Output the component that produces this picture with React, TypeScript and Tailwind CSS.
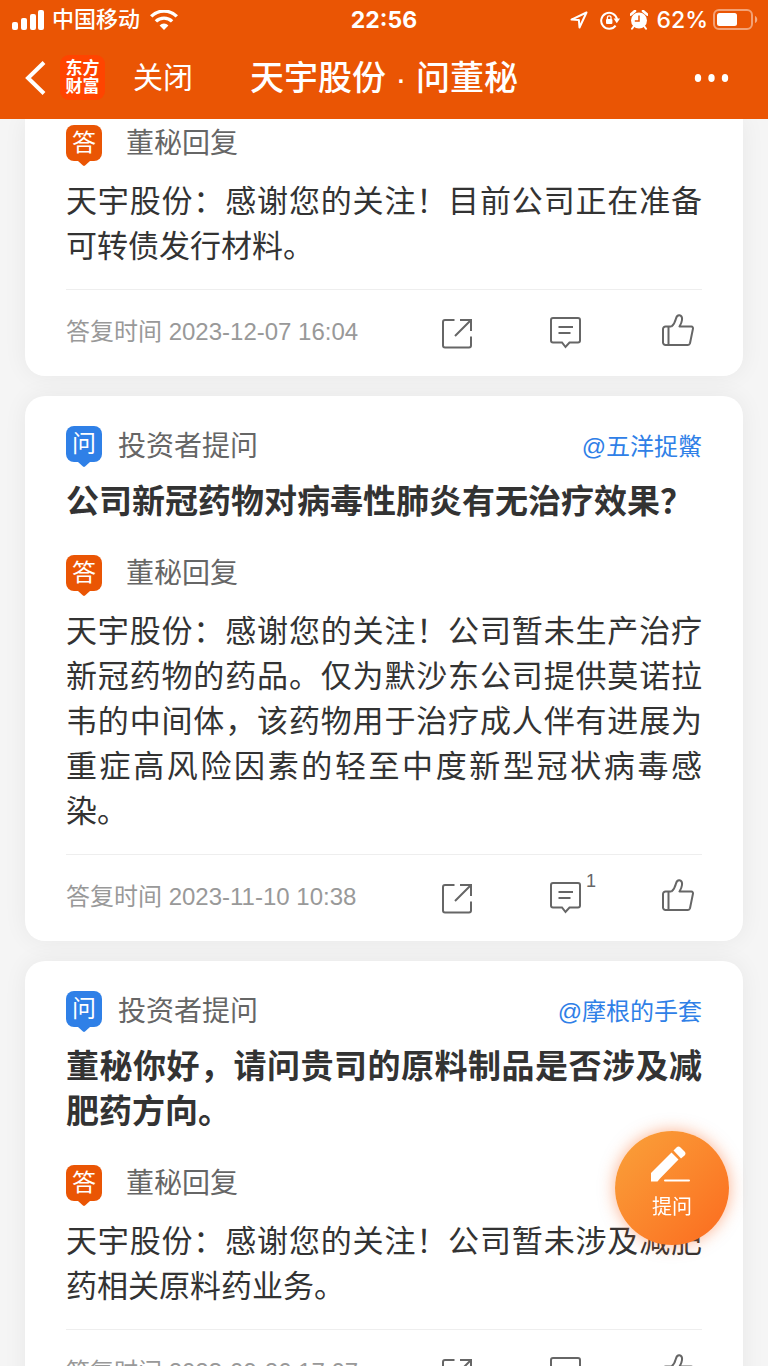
import React from 'react';
import clsx from 'clsx';

interface QaItem {
  id: number;
  user?: string;
  question?: string;
  answer: string;
  time: string;
  comments?: number;
}

const items: QaItem[] = [
  {
    id: 1,
    answer: '天宇股份：感谢您的关注！目前公司正在准备可转债发行材料。',
    time: '2023-12-07 16:04',
  },
  {
    id: 2,
    user: '@五洋捉鱉',
    question: '公司新冠药物对病毒性肺炎有无治疗效果？',
    answer:
      '天宇股份：感谢您的关注！公司暂未生产治疗新冠药物的药品。仅为默沙东公司提供莫诺拉韦的中间体，该药物用于治疗成人伴有进展为重症高风险因素的轻至中度新型冠状病毒感染。',
    time: '2023-11-10 10:38',
    comments: 1,
  },
  {
    id: 3,
    user: '@摩根的手套',
    question: '董秘你好，请问贵司的原料制品是否涉及减肥药方向。',
    answer: '天宇股份：感谢您的关注！公司暂未涉及减肥药相关原料药业务。',
    time: '2023-09-26 17:07',
  },
];

function StatusBar() {
  return (
    <div className="grid h-10 grid-cols-[1fr_auto_1fr] items-center px-3">
      <div className="flex items-center">
        <svg width="32" height="20" viewBox="0 0 32 20" fill="currentColor">
          <rect x="0" y="12" width="6" height="8" rx="2" />
          <rect x="9" y="8" width="6" height="12" rx="2" />
          <rect x="18" y="4" width="6" height="16" rx="2" />
          <rect x="26" y="0" width="6" height="20" rx="2" />
        </svg>
        <span className="ml-2 text-[22px] leading-none font-medium">中国移动</span>
        <svg className="ml-2.5" width="28" height="20" viewBox="0 0 28 20" fill="currentColor">
          <path d="M14 20l4.4-4.6a6.2 6.2 0 0 0-8.8 0z" />
          <path d="M5.9 11.4a11.6 11.6 0 0 1 16.2 0" fill="none" stroke="currentColor" strokeWidth="3.4" />
          <path d="M1.2 6.4a18.2 18.2 0 0 1 25.6 0" fill="none" stroke="currentColor" strokeWidth="3.4" />
        </svg>
      </div>
      <span className="font-['Inter'] text-[23px] leading-none font-bold">22:56</span>
      <div className="flex items-center justify-end">
        <svg width="18" height="18" viewBox="0 0 18 18" fill="none" stroke="currentColor" strokeWidth="2" strokeLinejoin="round">
          <path d="M16.5 1.5L1.5 8.6l7.4.5.6 7.4z" />
        </svg>
        <svg className="ml-3" width="20" height="20" viewBox="0 0 20 20" fill="none" stroke="currentColor" strokeWidth="2">
          <path d="M15.6 15.6A8 8 0 1 1 17 9" />
          <path d="M13.6 8.6h6.4l-3.2 4.6z" fill="currentColor" stroke="none" />
          <rect x="6" y="9" width="6.4" height="5" rx="1" fill="currentColor" stroke="none" />
          <path d="M7.4 9V7.6a1.8 1.8 0 0 1 3.6 0V9" strokeWidth="1.3" />
        </svg>
        <svg className="ml-2.5" width="18" height="20" viewBox="0 0 18 20" fill="none">
          <circle cx="9" cy="10.5" r="8" fill="currentColor" />
          <path d="M.8 4.6L5 .9M17.2 4.6L13 .9" stroke="currentColor" strokeWidth="2.6" strokeLinecap="round" />
          <path d="M3.6 16.5l-1.6 2.3M14.4 16.5l1.6 2.3" stroke="currentColor" strokeWidth="2" strokeLinecap="round" />
          <path d="M9 5.5v5.5H4.8" stroke="#ea5504" strokeWidth="1.5" />
        </svg>
        <span className="ml-2 font-['Inter'] text-[23px] leading-none font-medium">62%</span>
        <svg className="ml-1 -mr-0.5" width="46" height="22" viewBox="0 0 46 22" fill="none">
          <rect x="2" y="1" width="38" height="19" rx="5" stroke="currentColor" strokeOpacity=".45" strokeWidth="2" />
          <rect x="5" y="4" width="20" height="13" rx="2.5" fill="currentColor" />
          <path d="M43 7c3 1 3 6 0 7z" fill="currentColor" fillOpacity=".5" />
        </svg>
      </div>
    </div>
  );
}

function NavBar() {
  return (
    <div className="grid h-[79px] grid-cols-[1fr_auto_1fr] items-center px-[25px] pb-1">
      <div className="flex items-center">
        <button type="button" aria-label="返回">
          <svg width="21" height="34" viewBox="0 0 21 34" fill="none" stroke="currentColor" strokeWidth="4">
            <path d="M19 1.5L3 17l16 15.5" />
          </svg>
        </button>
        <div className="ml-3.5 flex size-[45px] flex-col items-center justify-center rounded-[9px] bg-[#ff4400] text-[17px] leading-[18px] font-bold">
          <span>东方</span>
          <span>财富</span>
        </div>
        <button type="button" className="ml-7 text-[30px] leading-none">
          关闭
        </button>
      </div>
      <h1 className="text-[34px] leading-none font-medium">天宇股份 · 问董秘</h1>
      <button type="button" aria-label="更多" className="mr-3 justify-self-end">
        <svg width="38" height="10" viewBox="0 0 38 10" fill="currentColor">
          <ellipse cx="5" cy="5" rx="3.2" ry="4" />
          <ellipse cx="18.5" cy="5" rx="3.2" ry="4" />
          <ellipse cx="32" cy="5" rx="3.2" ry="4" />
        </svg>
      </button>
    </div>
  );
}

function Badge({ children, ask }: { children: React.ReactNode; ask?: boolean }) {
  return (
    <span
      className={clsx(
        'relative flex size-9 items-center justify-center rounded-lg text-2xl leading-none text-white',
        ask ? 'bg-[#2f80e7]' : 'bg-[#ea5504]'
      )}
    >
      {children}
      <svg
        className={clsx('absolute top-full left-3', ask ? 'text-[#2f80e7]' : 'text-[#ea5504]')}
        width="12"
        height="5"
        viewBox="0 0 12 5"
        fill="currentColor"
      >
        <path d="M0 0h12L7 4.5q-1 .8-2 0z" />
      </svg>
    </span>
  );
}

function ShareIcon() {
  return (
    <svg width="30" height="36" viewBox="2 -3 30 36" fill="none" stroke="currentColor" strokeWidth="2">
      <path d="M14.5 3H5a2 2 0 0 0-2 2v23.5a2 2 0 0 0 2 2h24a2 2 0 0 0 2-2v-9" />
      <path d="M20 3h11v11M30.5 3.5L15 19" />
    </svg>
  );
}

function CommentIcon() {
  return (
    <svg width="34" height="36" viewBox="0 -3 34 36" fill="none" stroke="currentColor" strokeWidth="2">
      <path d="M3 1h25a2 2 0 0 1 2 2v20.5a2 2 0 0 1-2 2h-8.500L15.500 30 12 25.500H3a2 2 0 0 1-2-2V3a2 2 0 0 1 2-2z" />
      <path d="M8.500 10H23M8.500 16h12" />
    </svg>
  );
}

function LikeIcon() {
  return (
    <svg width="32" height="36" viewBox="0 0 32 36" fill="none" stroke="currentColor" strokeWidth="2" strokeLinejoin="round">
      <path d="M9.5 12.5C12 10.5 13 8.5 14 4.5c.6-2.5 2-3.5 3.5-3.3C19.500 1.500 20.300 3.500 20 6c-.3 2.500-1.200 4.500-2.500 6.500h11.700q2.200.2 1.700 2.500l-2.900 14.300q-.5 1.700-2 1.700H3.500A2.500 2.500 0 0 1 1 28.500V15a2.500 2.500 0 0 1 2.500-2.500h6M6.500 12.500V31" />
    </svg>
  );
}

function QaCard({ item }: { item: QaItem }) {
  return (
    <article
      className={clsx(
        'rounded-b-[20px] bg-white px-[41px] text-[#333] shadow-[0_0_24px_rgba(0,0,0,0.06)]',
        item.question ? 'rounded-t-[20px] pt-[30px]' : 'pt-1.5'
      )}
    >
      {item.question && (
        <>
          <div className="flex h-9 items-center">
            <Badge ask>问</Badge>
            <span className="ml-4 pt-1.5 text-[28px] leading-none text-[#666]">投资者提问</span>
            <a href="#user" className="ml-auto pt-1.5 text-2xl leading-none text-[#2f80e7]">
              {item.user}
            </a>
          </div>
          <h2 className="mt-[17px] mb-[31px] text-justify text-[33px] leading-[45px] font-bold">{item.question}</h2>
        </>
      )}
      <div className="flex h-9 items-center">
        <Badge>答</Badge>
        <span className="ml-6 pt-0.5 text-[28px] leading-none text-[#666]">董秘回复</span>
      </div>
      <p className="mt-[18px] text-justify text-[31px] leading-[45px]">{item.answer}</p>
      <div className="mt-5 flex h-[87px] items-center border-t border-[#eee] pr-2 pb-0.5">
        <span className="text-2xl leading-none text-[#999]">答复时间 {item.time}</span>
        <div className="ml-auto flex gap-[78px] text-[#666]">
          <button type="button" aria-label="分享">
            <ShareIcon />
          </button>
          <button type="button" aria-label="评论" className="relative">
            <CommentIcon />
            {item.comments && (
              <span className="absolute -top-3 left-full ml-0.5 text-lg">{item.comments}</span>
            )}
          </button>
          <button type="button" aria-label="点赞">
            <LikeIcon />
          </button>
        </div>
      </div>
    </article>
  );
}

export default function App() {
  return (
    <div className="flex h-screen flex-col bg-[#f5f5f5] font-['Liberation_Sans','Noto_Sans_CJK_SC',sans-serif]">
      <header className="z-10 shrink-0 bg-[#ea5504] text-white">
        <StatusBar />
        <NavBar />
      </header>
      <main className="flex min-h-0 flex-1 flex-col gap-5 overflow-y-auto px-[25px] [scrollbar-width:none]">
        {items.map((item) => (
          <QaCard key={item.id} item={item} />
        ))}
      </main>
      <button
        type="button"
        className="fixed right-[39px] bottom-[121px] flex size-[114px] flex-col items-center rounded-full bg-linear-to-br from-[#f9a13a] to-[#fb6a1e] pt-3.5 text-xl text-white shadow-[0_0_16px_rgba(250,100,30,0.5)]"
      >
        <svg width="44" height="38" viewBox="0 0 44 38" fill="currentColor">
          <path d="M1 28L21.500 7.500l7 7L10 33.500 7.500 36.500H1z" />
          <path d="M23.500 5.500l3-3q2-2 4 0l4 4q2 2 0 4l-3.500 3z" />
          <rect x="14" y="34.500" width="26" height="2" rx="1" />
        </svg>
        <span className="mt-2.5">提问</span>
      </button>
    </div>
  );
}
